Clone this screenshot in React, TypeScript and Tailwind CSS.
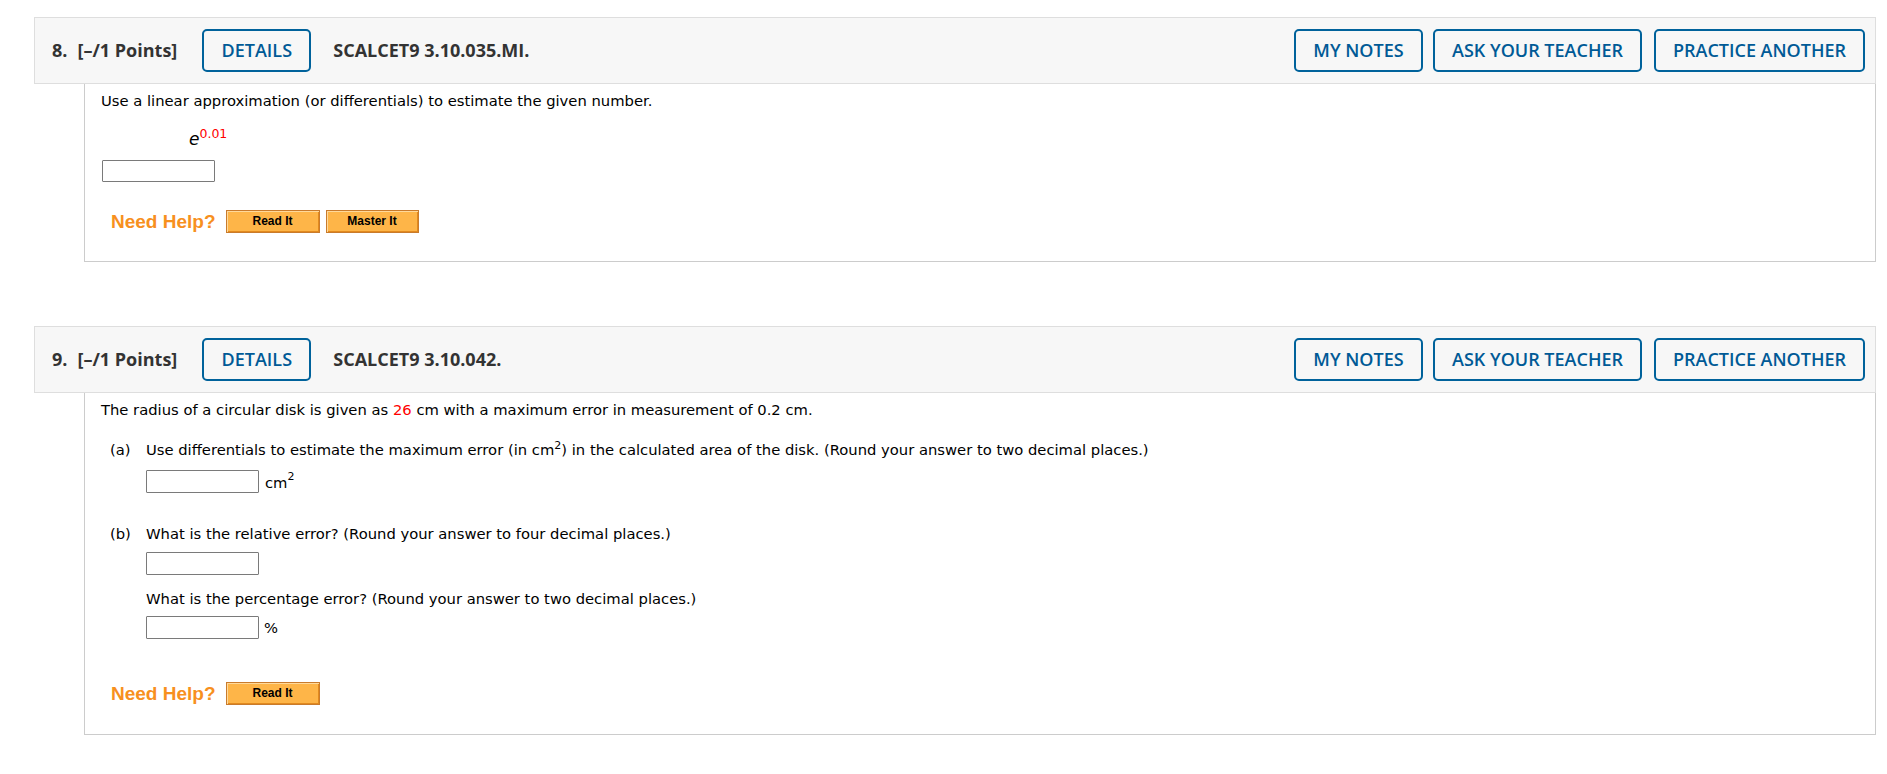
const head = "font-['Open_Sans',sans-serif] text-[18px]";
const body = "font-['DejaVu_Sans',Verdana,sans-serif] text-[14.75px] leading-[20px] text-black";

function OutlineButton({ label, w }: { label: string; w: string }) {
  return (
    <button
      className={`${w} h-[43px] rounded-[5px] border-2 border-[#00629b] bg-transparent text-center font-semibold text-[#005a96]`}
    >
      {label}
    </button>
  );
}

function Header({ num, code }: { num: number; code: string }) {
  return (
    <div className={`${head} flex h-[67px] items-center border border-[#dedede] bg-[#f7f7f7] pl-[17px] pr-[10px] text-[#333]`}>
      <span className="font-bold">{num}.</span>
      <span className="ml-[10px] font-bold">[–/1 Points]</span>
      <div className="ml-[25px]">
        <OutlineButton label="DETAILS" w="w-[109px]" />
      </div>
      <span className="ml-[22px] font-bold">{code}</span>
      <div className="ml-auto flex items-center">
        <OutlineButton label="MY NOTES" w="w-[129px]" />
        <div className="ml-[10px]">
          <OutlineButton label="ASK YOUR TEACHER" w="w-[209px]" />
        </div>
        <div className="ml-[12px]">
          <OutlineButton label="PRACTICE ANOTHER" w="w-[211px]" />
        </div>
      </div>
    </div>
  );
}

function HelpButton({ label, w }: { label: string; w: string }) {
  return (
    <button
      className={`${w} h-[23px] border border-[#c97b2c] bg-[#feb548] text-center font-['Liberation_Sans',Arial,sans-serif] text-[12px] leading-[21px] font-bold text-black shadow-[inset_1px_1px_0_#ffd99a,inset_-1px_-1px_0_#e28a1e]`}
    >
      {label}
    </button>
  );
}

function NeedHelp({ master }: { master?: boolean }) {
  return (
    <div className="flex h-[23px] items-center">
      <span className="ml-[10px] font-['Liberation_Sans',Arial,sans-serif] text-[19px] font-bold text-[#f7901e]">Need Help?</span>
      <div className="ml-[10px] flex gap-[6px]">
        <HelpButton label="Read It" w="w-[94px]" />
        {master && <HelpButton label="Master It" w="w-[93px]" />}
      </div>
    </div>
  );
}

function Box({ cls = "" }: { cls?: string }) {
  return <div className={`w-[113px] rounded-[1px] border border-[#7a7a7a] bg-white ${cls}`} />;
}

export default function App() {
  return (
    <div className="h-[774px] w-[1887px] bg-white pt-[17px] pr-[11px] pl-[34px]">
      <Header num={8} code="SCALCET9 3.10.035.MI." />
      <div className={`${body} ml-[50px] border-x border-b border-[#cccccc] pt-[7px] pb-[28px] pl-[16px]`}>
        <p>Use a linear approximation (or differentials) to estimate the given number.</p>
        <div className="mt-[18px] pl-[88px]">
          <i className="text-[17px]">e</i>
          <sup className="top-[-0.6em] text-[12.5px] text-[#ff0000]">0.01</sup>
        </div>
        <Box cls="mt-[10px] h-[22px] ml-[1px]" />
        <div className="mt-[28px]">
          <NeedHelp master />
        </div>
      </div>

      <div className="mt-[64px]">
        <Header num={9} code="SCALCET9 3.10.042." />
      </div>
      <div className={`${body} ml-[50px] border-x border-b border-[#cccccc] pt-[7px] pb-[29px] pl-[16px]`}>
        <p>
          The radius of a circular disk is given as <span className="text-[#ff0000]">26</span> cm with a maximum error in
          measurement of 0.2 cm.
        </p>
        <div className="mt-[20px] flex pl-[9px]">
          <span className="w-[36px]">(a)</span>
          <span>
            Use differentials to estimate the maximum error (in cm<sup>2</sup>) in the calculated area of the disk. (Round
            your answer to two decimal places.)
          </span>
        </div>
        <div className="mt-[10px] flex items-end pl-[45px]">
          <Box cls="h-[23px]" />
          <span className="ml-[6px] leading-[20px]">
            cm<sup className="top-[-0.7em]">2</sup>
          </span>
        </div>
        <div className="mt-[31px] flex pl-[9px]">
          <span className="w-[36px]">(b)</span>
          <span>What is the relative error? (Round your answer to four decimal places.)</span>
        </div>
        <div className="mt-[8px] pl-[45px]">
          <Box cls="h-[23px]" />
        </div>
        <p className="mt-[14px] pl-[45px]">What is the percentage error? (Round your answer to two decimal places.)</p>
        <div className="mt-[7px] flex items-center pl-[45px]">
          <Box cls="h-[23px]" />
          <span className="ml-[5px]">%</span>
        </div>
        <div className="mt-[43px]">
          <NeedHelp />
        </div>
      </div>
    </div>
  );
}
